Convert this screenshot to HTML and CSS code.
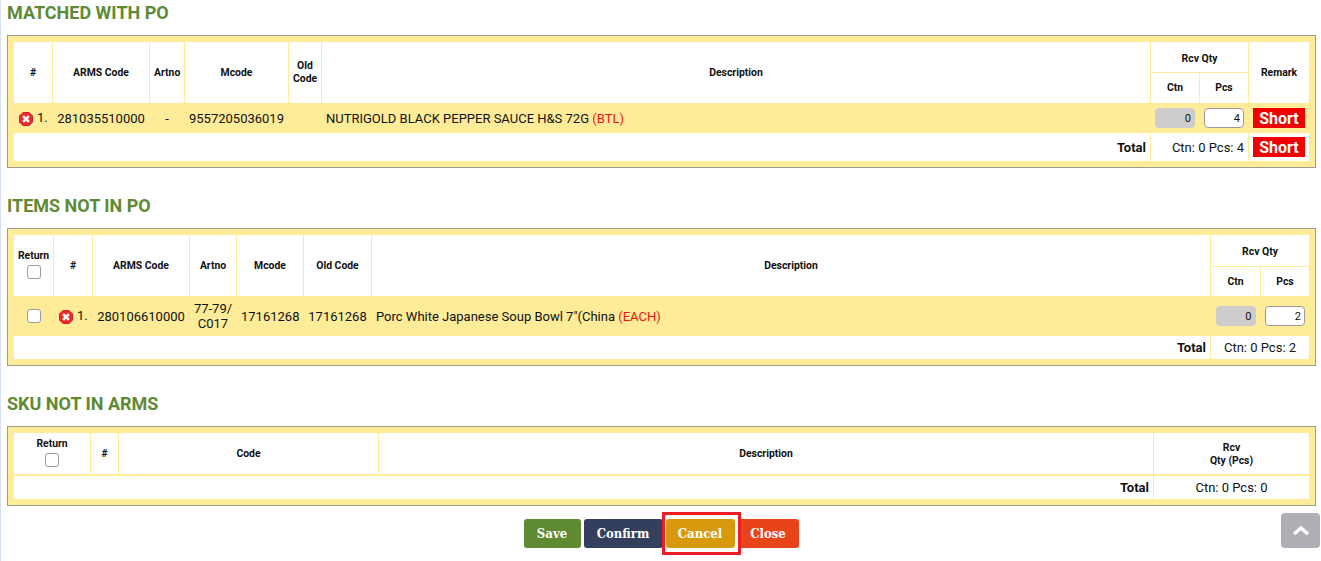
FILE: index.html
```html
<!DOCTYPE html>
<html lang="en">
<head>
<meta charset="utf-8">
<title>GRN Items</title>
<link rel="stylesheet" href="styles.css">
</head>
<body>
<svg class="defs" width="0" height="0" aria-hidden="true">
  <defs>
    <symbol id="err" viewBox="0 0 15 15">
      <path d="M4.2.5h6.6l3.7 3.7v6.6l-3.7 3.7H4.2L.5 10.800V4.200z" fill="#ec2a2e" stroke="#cf1c20"/>
      <path d="M4.400 4.400l6.200 6.200M10.600 4.400l-6.200 6.200" stroke="#fff" stroke-width="2.800" fill="none"/>
    </symbol>
  </defs>
</svg>
<main class="page">
  <section class="section">
    <h2 class="title">MATCHED WITH PO</h2>
    <div class="panel">
      <table class="grid">
        <colgroup><col class="w39"><col class="w97"><col class="w35"><col class="w104"><col class="w33"><col class="w829"><col class="w49"><col class="w49"><col class="w60"></colgroup>
        <thead>
          <tr class="h31">
            <th rowspan="2">#</th><th rowspan="2">ARMS Code</th><th rowspan="2">Artno</th><th rowspan="2">Mcode</th><th rowspan="2" class="lift">Old<br>Code</th><th rowspan="2">Description</th><th colspan="2" class="under">Rcv Qty</th><th rowspan="2" class="end">Remark</th>
          </tr>
          <tr class="h30"><th class="lift">Ctn</th><th class="lift">Pcs</th></tr>
        </thead>
        <tbody>
          <tr class="row h30">
            <td class="idx"><svg class="err"><use href="#err"/></svg><span class="num">1.</span></td>
            <td class="c">281035510000</td><td class="c">-</td><td class="c">9557205036019</td><td class="c"></td>
            <td>NUTRIGOLD BLACK PEPPER SAUCE H&amp;S 72G <span class="uom">(BTL)</span></td>
            <td class="c tight"><input class="qty off" value="0" readonly></td>
            <td class="c tight"><input class="qty" value="4"></td>
            <td class="c tight end"><span class="short">Short</span></td>
          </tr>
          <tr class="h28">
            <td colspan="6" class="total">Total</td>
            <td colspan="2" class="sum">Ctn: 0 Pcs: 4</td>
            <td class="c tight end"><span class="short">Short</span></td>
          </tr>
        </tbody>
      </table>
    </div>
  </section>

  <section class="section">
    <h2 class="title">ITEMS NOT IN PO</h2>
    <div class="panel">
      <table class="grid">
        <colgroup><col class="w40"><col class="w39"><col class="w97"><col class="w47"><col class="w67"><col class="w68"><col class="w839"><col class="w50"><col class="w48"></colgroup>
        <thead>
          <tr class="h32">
            <th rowspan="2" class="tight stack">Return<input type="checkbox" class="check"></th><th rowspan="2">#</th><th rowspan="2">ARMS Code</th><th rowspan="2">Artno</th><th rowspan="2">Mcode</th><th rowspan="2">Old Code</th><th rowspan="2">Description</th><th colspan="2" class="under end">Rcv Qty</th>
          </tr>
          <tr class="h29"><th>Ctn</th><th class="end">Pcs</th></tr>
        </thead>
        <tbody>
          <tr class="row h40">
            <td class="c tight"><input type="checkbox" class="check inline"></td>
            <td class="idx"><svg class="err"><use href="#err"/></svg><span class="num">1.</span></td>
            <td class="c">280106610000</td><td class="c tight nowrap">77-79/<br>C017</td><td class="c">17161268</td><td class="c">17161268</td>
            <td>Porc White Japanese Soup Bowl 7"(China <span class="uom">(EACH)</span></td>
            <td class="c tight"><input class="qty off" value="0" readonly></td>
            <td class="c tight end"><input class="qty" value="2"></td>
          </tr>
          <tr class="h23">
            <td colspan="7" class="total">Total</td>
            <td colspan="2" class="c end">Ctn: 0 Pcs: 2</td>
          </tr>
        </tbody>
      </table>
    </div>
  </section>

  <section class="section">
    <h2 class="title">SKU NOT IN ARMS</h2>
    <div class="panel">
      <table class="grid">
        <colgroup><col class="w77"><col class="w28"><col class="w260"><col class="w775"><col class="w155"></colgroup>
        <thead>
          <tr class="h43 ruled">
            <th class="tight stack">Return<input type="checkbox" class="check"></th><th>#</th><th>Code</th><th>Description</th><th class="end">Rcv<br>Qty (Pcs)</th>
          </tr>
        </thead>
        <tbody>
          <tr class="h23">
            <td colspan="4" class="total">Total</td>
            <td class="c end">Ctn: 0 Pcs: 0</td>
          </tr>
        </tbody>
      </table>
    </div>
  </section>

  <div class="actions">
    <button class="btn save" type="button">Save</button>
    <button class="btn confirm" type="button">Confirm</button>
    <span class="marked"><button class="btn cancel" type="button">Cancel</button></span>
    <button class="btn close" type="button">Close</button>
  </div>
</main>
<a class="totop" href="#" aria-label="Back to top">
  <svg width="18" height="11" viewBox="0 0 18 11"><path d="M2 9l7-6 7 6" fill="none" stroke="#fff" stroke-width="3.600"/></svg>
</a>
</body>
</html>
```

FILE: styles.css
```css
* { box-sizing: border-box; }
html, body { margin: 0; height: 100%; }
body {
  overflow: hidden;
  background: #fff;
  border-left: 1px solid #d6e2f1;
  font-family: Roboto, "Liberation Sans", sans-serif;
  font-size: 13px;
  color: #111;
}
.defs { position: absolute; }
.page { padding: 3px 5px 0 6px; }
.section { margin-bottom: 28px; }
.section:last-of-type { margin-bottom: 0; }
.title {
  margin: 0 0 12px;
  font-size: 18px;
  line-height: 20px;
  font-weight: 700;
  color: #5f8a35;
}
.panel {
  background: #ffec99;
  border: 1px solid #9c9c94;
  padding: 6px;
}
.grid {
  width: 100%;
  table-layout: fixed;
  border-collapse: separate;
  border-spacing: 0;
  background: #fff;
}
.w28 { width: 28px; } .w33 { width: 33px; } .w35 { width: 35px; } .w39 { width: 39px; }
.w40 { width: 40px; } .w47 { width: 47px; } .w48 { width: 48px; } .w49 { width: 49px; }
.w50 { width: 50px; } .w60 { width: 60px; } .w67 { width: 67px; } .w68 { width: 68px; }
.w77 { width: 77px; } .w97 { width: 97px; } .w104 { width: 104px; } .w155 { width: 155px; }
.w260 { width: 260px; } .w775 { width: 775px; } .w829 { width: 829px; } .w839 { width: 839px; }
.h23 { height: 23px; } .h28 { height: 28px; } .h29 { height: 29px; } .h30 { height: 30px; }
.h31 { height: 31px; } .h32 { height: 32px; } .h40 { height: 40px; } .h43 { height: 43px; }
th, td {
  padding: 2px 4px;
  border-right: 1px solid #ffec99;
  vertical-align: middle;
}
th {
  font-size: 10.4px;
  line-height: 13px;
  font-weight: 700;
  text-align: center;
  color: #111;
}
th.lift { padding-bottom: 4px; }
th.under { padding-top: 3px; padding-bottom: 1px; border-bottom: 1px solid #ffec99; }
.ruled th { border-bottom: 2px solid #ffec99; }
th.stack { padding-bottom: 4px; }
.end { border-right: 0; }
.tight { padding: 0; }
.nowrap { white-space: nowrap; }
.row td { background: #ffec99; line-height: 15px; }
.c { text-align: center; }
.sum { text-align: right; }
.total { text-align: right; font-weight: 700; }
.idx { white-space: nowrap; padding: 0 0 0 5px; }
.err { width: 14px; height: 14px; vertical-align: -3px; }
.num { margin-left: 4px; position: relative; top: -1px; }
.uom { color: #f01414; }
.qty {
  display: block;
  margin: 0 auto;
  width: 40px;
  height: 20px;
  padding: 0 3px;
  background: #fff;
  border: 1px solid #9a9a9a;
  border-radius: 4px;
  font: 11px Roboto, sans-serif;
  color: #111;
  text-align: right;
}
.qty.off { background: #cdcdcd; border-color: #cdcdcd; }
.check {
  appearance: none;
  display: block;
  margin: 3px auto 0;
  width: 14px;
  height: 14px;
  background: #fff;
  border: 1px solid #9a9aa6;
  border-radius: 3px;
}
.check.inline { margin-top: 0; }
.short {
  display: block;
  margin: 0 auto;
  width: 52px;
  height: 20px;
  background: #f00000;
  color: #fff;
  font-size: 16px;
  font-weight: 700;
  line-height: 21px;
  text-align: center;
}
.actions {
  display: flex;
  justify-content: center;
  gap: 3px;
  margin-top: 13px;
  padding-right: 1px;
}
.btn {
  height: 29px;
  padding: 0;
  border: 0;
  border-radius: 3px;
  color: #fff;
  font: 700 13px "DejaVu Serif Condensed", "DejaVu Serif", serif;
  font-stretch: condensed;
}
.save { width: 57px; background: #5e8a32; }
.confirm { width: 79px; background: #333f5c; }
.cancel { width: 69px; background: #d79a0f; display: block; }
.close { width: 61px; background: #e94419; }
.marked { position: relative; display: block; }
.marked::after {
  content: "";
  position: absolute;
  left: -4px;
  right: -6px;
  top: -7px;
  bottom: -7px;
  border: 3px solid #ee1c25;
  pointer-events: none;
}
.totop {
  position: fixed;
  left: 1281px;
  top: 513px;
  width: 39px;
  height: 35px;
  display: flex;
  align-items: center;
  justify-content: center;
  background: #aeaeb4;
  border-radius: 4px;
}
```
